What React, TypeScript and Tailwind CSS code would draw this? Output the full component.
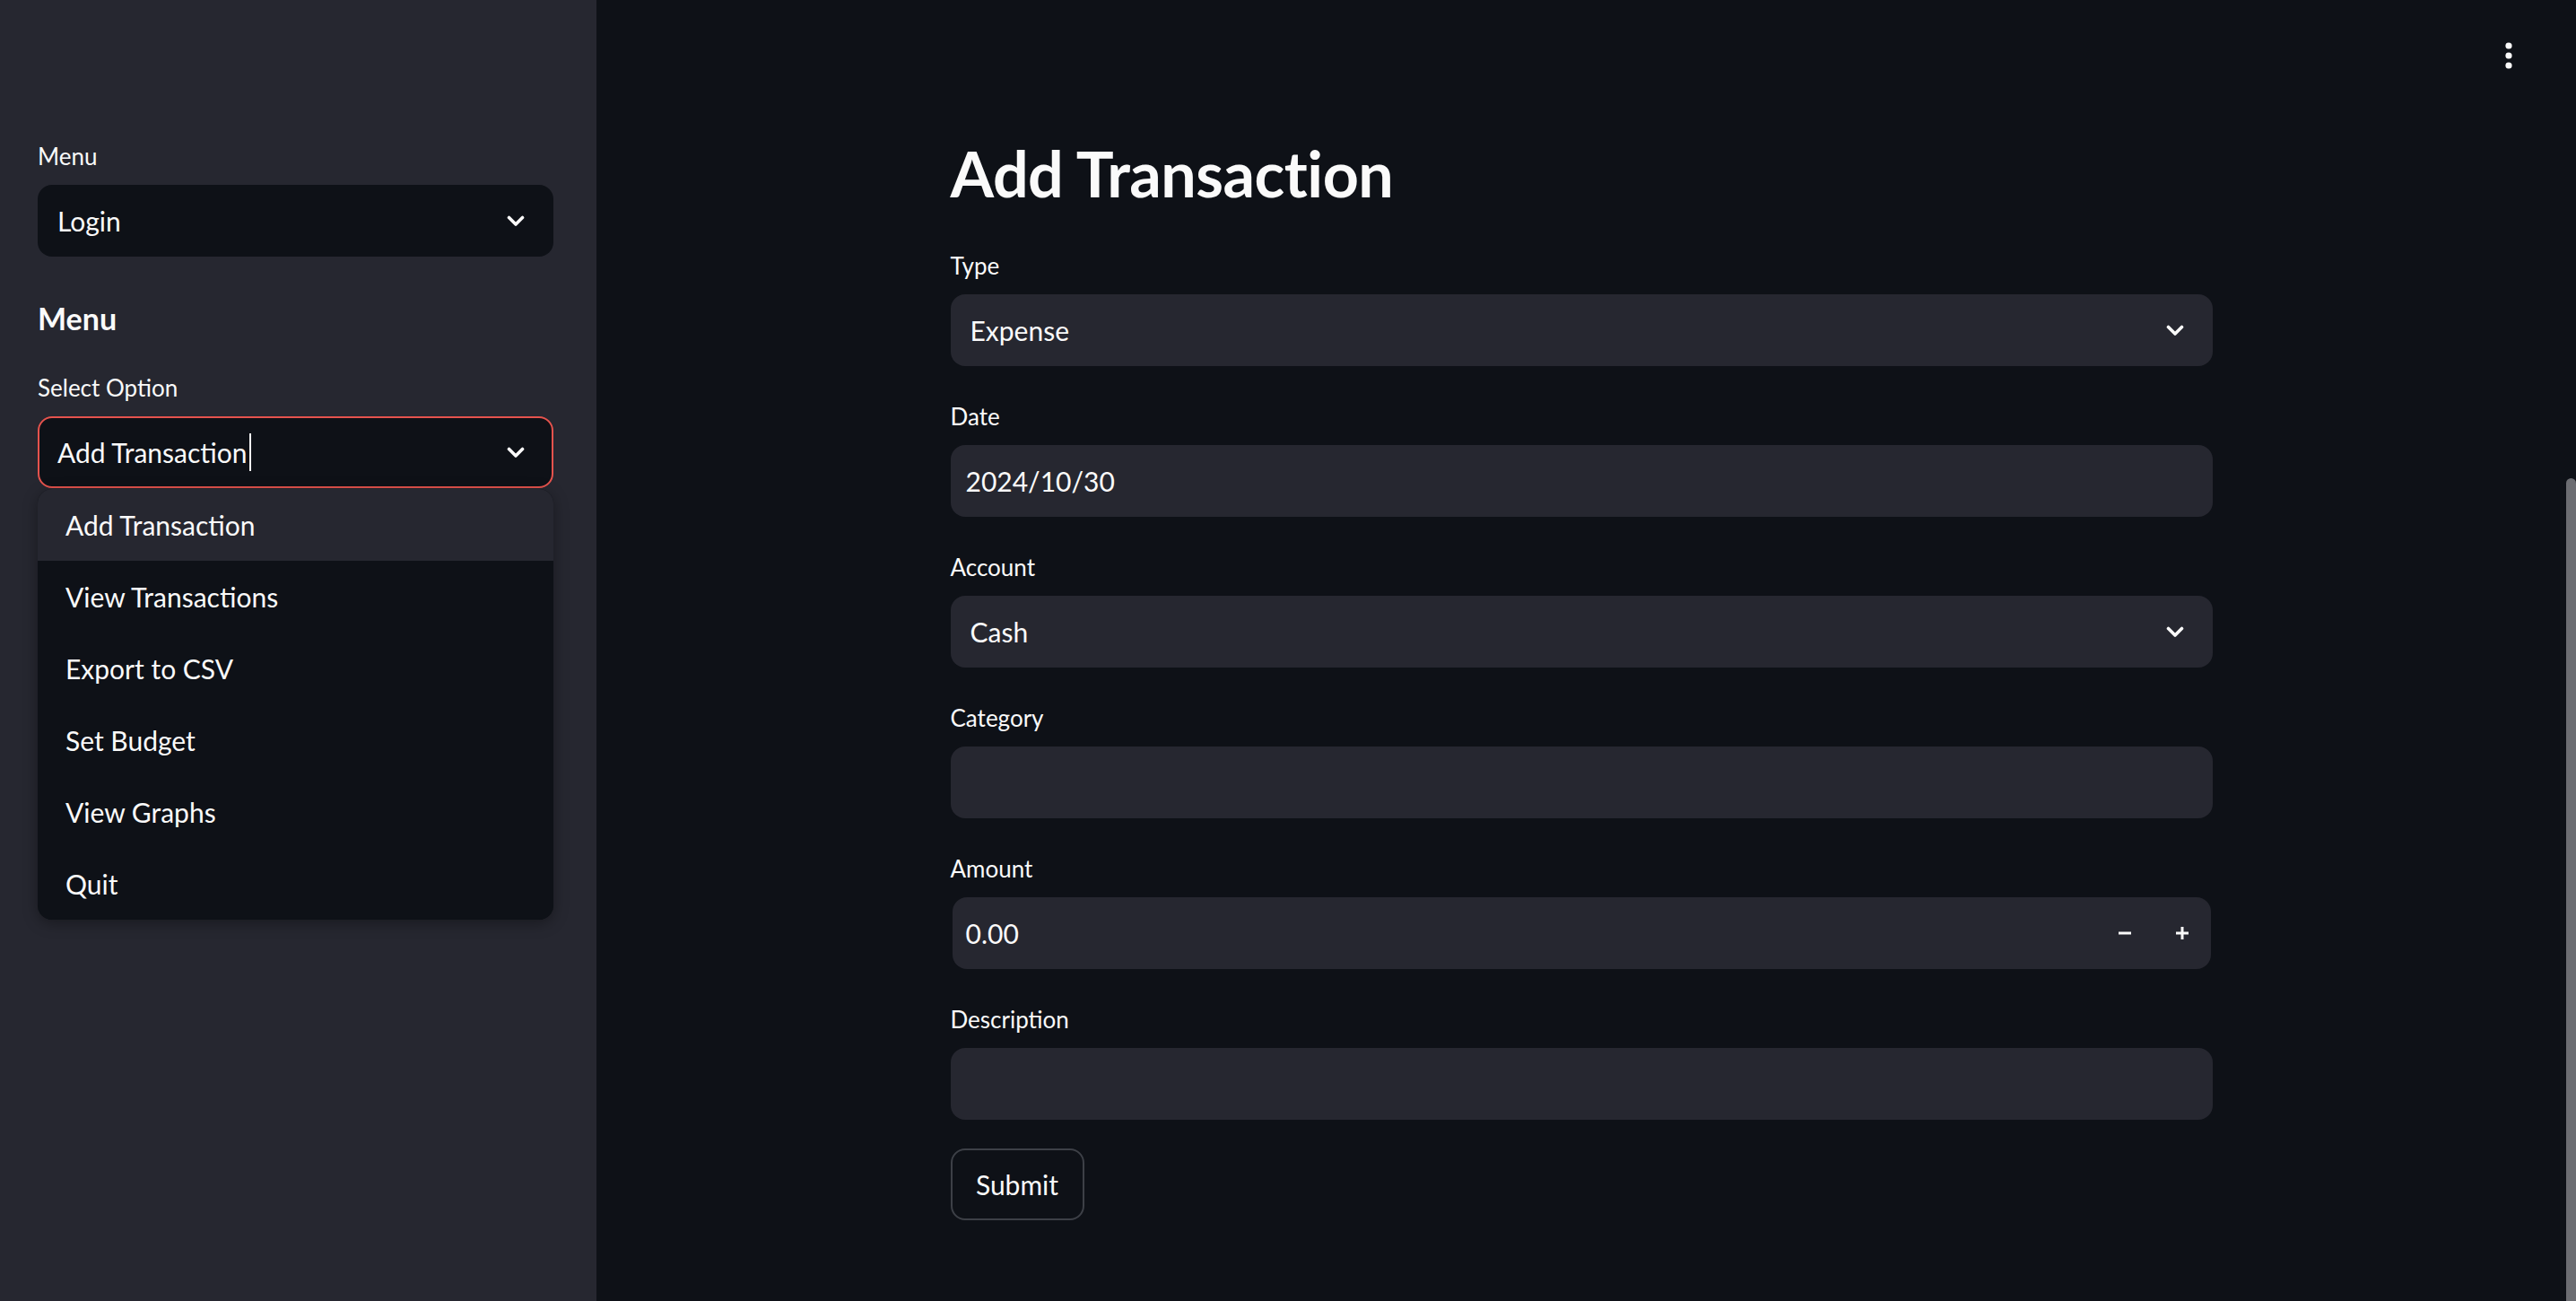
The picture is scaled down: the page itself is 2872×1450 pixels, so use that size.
import React from "react";

function Chevron() {
  return (
    <svg width="20" height="13" viewBox="0 0 20 13" fill="none" className="shrink-0">
      <path d="M2.5 2.5 L10 10 L17.5 2.5" stroke="#fafafa" strokeWidth="3.6" strokeLinecap="round" strokeLinejoin="round" />
    </svg>
  );
}

function Label({ children, className = "" }: { children: React.ReactNode; className?: string }) {
  return <div className={"h-[36px] mb-[14px] flex items-center text-[26px] leading-[36px] " + className}>{children}</div>;
}

function Field({ label, children }: { label: string; children: React.ReactNode }) {
  return (
    <div>
      <Label>{label}</Label>
      {children}
    </div>
  );
}

export default function App() {
  const items = ["Add Transaction", "View Transactions", "Export to CSV", "Set Budget", "View Graphs", "Quit"];
  return (
    <div className="flex h-[1450px] w-[2872px] overflow-hidden bg-[#0e1117] text-[#fafafa] font-['Lato',sans-serif]">
      <aside className="w-[665px] shrink-0 bg-[#262730] pl-[42px] pr-[48px] pt-[156px]">
        <Label>Menu</Label>
        <div className="h-[80px] rounded-[16px] bg-[#0e1117] flex items-center justify-between pl-[22px] pr-[32px] text-[30px]">
          <span>Login</span>
          <Chevron />
        </div>
        <h3 className="mt-[49px] h-[40px] leading-[40px] text-[34px] font-bold">Menu</h3>
        <Label className="mt-[39px]">Select Option</Label>
        <div className="relative">
          <div className="h-[80px] rounded-[16px] bg-[#0e1117] border-2 border-[#e5534d] flex items-center justify-between pl-[20px] pr-[30px] text-[30px]">
            <span className="flex items-center">
              Add Transaction
              <span className="ml-[2px] inline-block w-[2px] h-[42px] bg-[#fafafa]" />
            </span>
            <Chevron />
          </div>
          <div className="absolute left-0 right-0 top-[calc(100%+1px)] rounded-[16px] overflow-hidden bg-[#0e1117] shadow-[0_4px_16px_rgba(0,0,0,0.35)] z-10">
            {items.map((it, i) => (
              <div
                key={it}
                className={
                  "h-[80px] flex items-center pl-[31px] text-[30px] " + (i === 0 ? "bg-[#262730]" : "bg-[#0e1117]")
                }
              >
                {it}
              </div>
            ))}
          </div>
        </div>
      </aside>

      <main className="relative flex-1 flex justify-center pt-[151px]">
        <div className="w-[1407px]">
          <h1 className="h-[84px] leading-[84px] text-[70px] font-bold tracking-[-0.5px]">Add Transaction</h1>
          <div className="mt-[43px] flex flex-col gap-[38px]">
            <Field label="Type">
              <div className="h-[80px] rounded-[16px] bg-[#262730] flex items-center justify-between pl-[22px] pr-[32px] text-[30px]">
                <span>Expense</span>
                <Chevron />
              </div>
            </Field>
            <Field label="Date">
              <div className="h-[80px] rounded-[16px] bg-[#262730] flex items-center pl-[17px] text-[30px]">
                2024/10/30
              </div>
            </Field>
            <Field label="Account">
              <div className="h-[80px] rounded-[16px] bg-[#262730] flex items-center justify-between pl-[22px] pr-[32px] text-[30px]">
                <span>Cash</span>
                <Chevron />
              </div>
            </Field>
            <Field label="Category">
              <div className="h-[80px] rounded-[16px] bg-[#262730]" />
            </Field>
            <Field label="Amount">
              <div className="h-[80px] rounded-[16px] bg-[#262730] flex items-center text-[30px] mx-[2px]">
                <span className="flex-1 pl-[15px]">0.00</span>
                <div className="w-[64px] h-full flex items-center justify-center">
                  <svg width="16" height="16" viewBox="0 0 16 16">
                    <rect x="1" y="6.5" width="14" height="3" fill="#fafafa" />
                  </svg>
                </div>
                <div className="w-[64px] h-full flex items-center justify-center">
                  <svg width="16" height="16" viewBox="0 0 16 16">
                    <rect x="1" y="6.5" width="14" height="3" fill="#fafafa" />
                    <rect x="6.5" y="1" width="3" height="14" fill="#fafafa" />
                  </svg>
                </div>
              </div>
            </Field>
            <Field label="Description">
              <div className="h-[80px] rounded-[16px] bg-[#262730]" />
            </Field>
          </div>
          <button className="mt-[32px] h-[80px] w-[149px] rounded-[16px] border-2 border-[#3d4047] bg-[#0e1117] text-[30px] text-[#fafafa] flex items-center justify-center">
            Submit
          </button>
        </div>
        <div className="absolute top-[47px] right-[60px]">
          <svg width="8" height="30" viewBox="0 0 8 30">
            <circle cx="4" cy="4" r="3.6" fill="#fafafa" />
            <circle cx="4" cy="15" r="3.6" fill="#fafafa" />
            <circle cx="4" cy="26" r="3.6" fill="#fafafa" />
          </svg>
        </div>
      </main>
      <div className="w-[11px] shrink-0 flex flex-col justify-end">
        <div className="h-[917px] rounded-t-full bg-[#6c6d72]" />
      </div>
    </div>
  );
}
